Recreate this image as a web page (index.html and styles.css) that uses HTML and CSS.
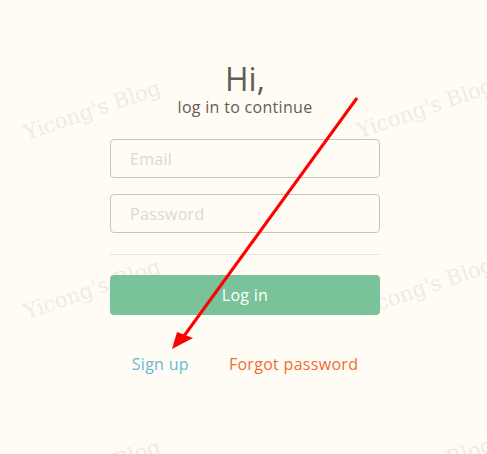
FILE: index.html
```html
<!DOCTYPE html>
<html>
<head>
<meta charset="utf-8">
<link rel="stylesheet" href="styles.css">
</head>
<body>
<div class="watermarks" aria-hidden="true">
  <span class="wm wm-a1">Yicong's Blog</span>
  <span class="wm wm-b1">Yicong's Blog</span>
  <span class="wm wm-a2">Yicong's Blog</span>
  <span class="wm wm-b2">Yicong's Blog</span>
  <span class="wm wm-a3">Yicong's Blog</span>
  <span class="wm wm-b3">Yicong's Blog</span>
</div>
<main class="page">
  <div class="card">
    <h1 class="title">Hi,</h1>
    <p class="subtitle">log in to continue</p>
    <form class="form">
      <input class="field" type="email" placeholder="Email">
      <input class="field" type="password" placeholder="Password">
      <hr class="divider">
      <button class="btn" type="button">Log in</button>
    </form>
    <div class="links">
      <a class="link signup" href="#">Sign up</a>
      <a class="link forgot" href="#">Forgot password</a>
    </div>
  </div>
</main>
<svg class="arrow" width="487" height="454" viewBox="0 0 487 454">
  <line x1="357" y1="98" x2="184" y2="336" stroke="#ff0000" stroke-width="3"/>
  <polygon points="177,332 193,338 172,349" fill="#ff0000"/>
</svg>
</body>
</html>
```
FILE: styles.css
```css
html, body {
  margin: 0;
  padding: 0;
  background: #fffcf5;
  width: 487px;
  height: 454px;
  overflow: hidden;
  font-family: "Open Sans", "Noto Sans", sans-serif;
}
.watermarks {
  position: absolute;
  inset: 0;
  overflow: hidden;
  pointer-events: none;
}
.wm {
  position: absolute;
  font-family: "DejaVu Serif", "Liberation Serif", serif;
  font-size: 21px;
  color: #efebe4;
  white-space: nowrap;
  transform-origin: 0 100%;
  transform: rotate(-19deg);
  line-height: 1;
}
.wm-a1 { left: 28px; top: 123px; }
.wm-b1 { left: 361px; top: 121px; }
.wm-a2 { left: 28px; top: 302px; }
.wm-b2 { left: 361px; top: 300px; }
.wm-a3 { left: 28px; top: 482px; }
.wm-b3 { left: 361px; top: 480px; }
.page {
  position: relative;
  display: flex;
  justify-content: center;
  padding-left: 3px;
  padding-top: 63px;
}
.card {
  width: 270px;
  display: flex;
  flex-direction: column;
  align-items: center;
}
.title {
  margin: 0;
  font-size: 32px;
  font-weight: 400;
  line-height: 32px;
  color: #645d55;
}
.subtitle {
  margin: 2px 0 0;
  font-size: 16px;
  line-height: 20px;
  letter-spacing: 0.3px;
  color: #6b5a4f;
}
.form {
  width: 100%;
  margin-top: 22px;
  display: flex;
  flex-direction: column;
  gap: 16px;
}
.field {
  box-sizing: border-box;
  width: 100%;
  height: 39px;
  margin: 0;
  border: 1px solid #cbc4ba;
  border-radius: 4px;
  background: transparent;
  padding: 0 19px;
  font-family: inherit;
  font-size: 16px;
  letter-spacing: 0.3px;
  color: #555;
}
.field::placeholder {
  color: #dcd8d2;
}
.divider {
  margin: 5px 0 4px;
  border: 0;
  border-top: 1px solid #e6e1da;
  height: 0;
}
.btn {
  height: 40px;
  width: 100%;
  border: 0;
  border-radius: 4px;
  background: #7ac29a;
  color: #fff;
  font-family: inherit;
  font-size: 16px;
  letter-spacing: 0.3px;
}
.links {
  margin-top: 39px;
  display: flex;
  gap: 40px;
  justify-content: center;
}
.link {
  text-decoration: none;
  font-size: 16px;
  line-height: 20px;
  letter-spacing: 0.3px;
}
.signup { color: #68b9d3; }
.forgot { color: #f26b32; }
.arrow {
  position: absolute;
  left: 0;
  top: 0;
  pointer-events: none;
}
```
